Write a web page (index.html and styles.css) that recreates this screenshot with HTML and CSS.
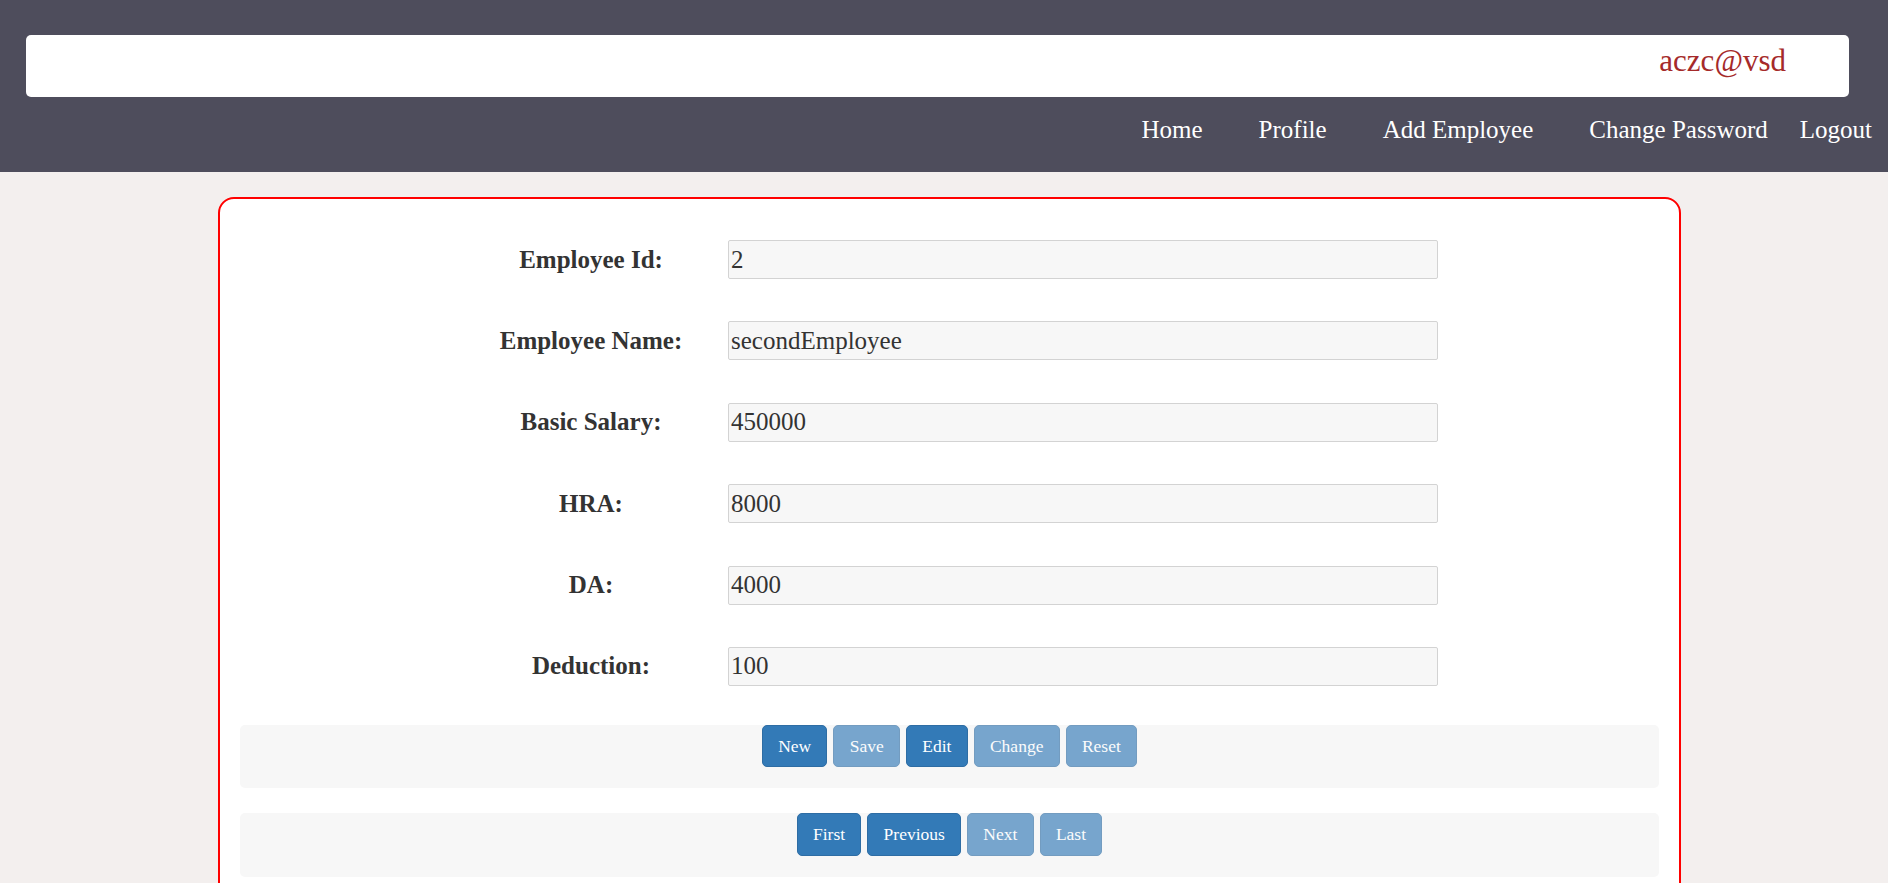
FILE: index.html
```html
<!DOCTYPE html>
<html lang="en">
<head>
<meta charset="utf-8">
<title>Employee</title>
<link rel="stylesheet" href="styles.css">
</head>
<body>
<header class="topbar">
  <div class="userbox"><span class="username">aczc@vsd</span></div>
  <nav class="nav">
    <a class="nav-link" href="#">Home</a>
    <a class="nav-link" href="#">Profile</a>
    <a class="nav-link" href="#">Add Employee</a>
    <a class="nav-link nav-link-tight" href="#">Change Password</a>
    <a class="nav-link nav-link-end" href="#">Logout</a>
  </nav>
</header>
<main class="page">
  <section class="card">
    <form class="form-grid">
      <label class="field-label">Employee Id:</label>
      <input class="field-input" type="text" value="2">
      <label class="field-label">Employee Name:</label>
      <input class="field-input" type="text" value="secondEmployee">
      <label class="field-label">Basic Salary:</label>
      <input class="field-input" type="text" value="450000">
      <label class="field-label">HRA:</label>
      <input class="field-input" type="text" value="8000">
      <label class="field-label">DA:</label>
      <input class="field-input" type="text" value="4000">
      <label class="field-label">Deduction:</label>
      <input class="field-input" type="text" value="100">
    </form>
    <div class="btn-bar btn-bar-first">
      <button class="btn">New</button>
      <button class="btn btn-disabled">Save</button>
      <button class="btn">Edit</button>
      <button class="btn btn-disabled">Change</button>
      <button class="btn btn-disabled">Reset</button>
    </div>
    <div class="btn-bar">
      <button class="btn">First</button>
      <button class="btn">Previous</button>
      <button class="btn btn-disabled">Next</button>
      <button class="btn btn-disabled">Last</button>
    </div>
  </section>
</main>
</body>
</html>
```
FILE: styles.css
```css
* { box-sizing: border-box; }

html, body {
  margin: 0;
  padding: 0;
}

body {
  background: #f3efee;
  font-family: "Liberation Serif", "Times New Roman", serif;
  color: #333;
  height: 883px;
  overflow: hidden;
}

.topbar {
  background: #4e4d5c;
  height: 172px;
  padding-top: 35px;
}

.userbox {
  margin-left: 26px;
  width: 1823px;
  height: 62px;
  background: #fff;
  border-radius: 5px;
  display: flex;
  justify-content: flex-end;
  padding-right: 63px;
  padding-top: 8px;
}

.username {
  color: #a52a2a;
  font-size: 31px;
  line-height: 36px;
}

.nav {
  display: flex;
  justify-content: flex-end;
  margin-top: 18px;
  padding-right: 16px;
}

.nav-link {
  color: #fff;
  text-decoration: none;
  font-size: 25px;
  line-height: 29px;
  margin-right: 56px;
}

.nav-link-tight { margin-right: 32px; }
.nav-link-end { margin-right: 0; }

.page {
  padding-top: 25px;
}

.card {
  margin-left: 218px;
  width: 1463px;
  min-height: 720px;
  background: #fff;
  border: 2px solid #ff0000;
  border-radius: 16px;
  padding: 41px 20px 0;
}

.form-grid {
  display: grid;
  grid-template-columns: 274px 710px;
  grid-auto-rows: 39px;
  row-gap: 42.4px;
  margin: 0 0 0 214px;
  align-items: center;
}

.field-label {
  text-align: center;
  font-weight: bold;
  font-size: 25px;
  color: #333;
}

.field-input {
  height: 39px;
  width: 710px;
  border: 1px solid #d3d3d3;
  border-radius: 2px;
  background: #f7f7f7;
  font-family: "Liberation Serif", "Times New Roman", serif;
  font-size: 25px;
  color: #333;
  padding: 0 2px;
  margin: 0;
}

.btn-bar {
  background: #f7f7f7;
  border-radius: 5px;
  display: flex;
  justify-content: center;
  gap: 6px;
  padding-bottom: 21px;
  margin-top: 25px;
}

.btn-bar-first { margin-top: 39px; }

.btn {
  font-family: "Liberation Serif", "Times New Roman", serif;
  font-size: 17.5px;
  line-height: 25px;
  padding: 7.75px 15.25px;
  color: #fff;
  background: #337ab7;
  border: 1px solid #2e6da4;
  border-radius: 5px;
  cursor: pointer;
}

.btn-disabled {
  opacity: 0.65;
  cursor: not-allowed;
}
```
